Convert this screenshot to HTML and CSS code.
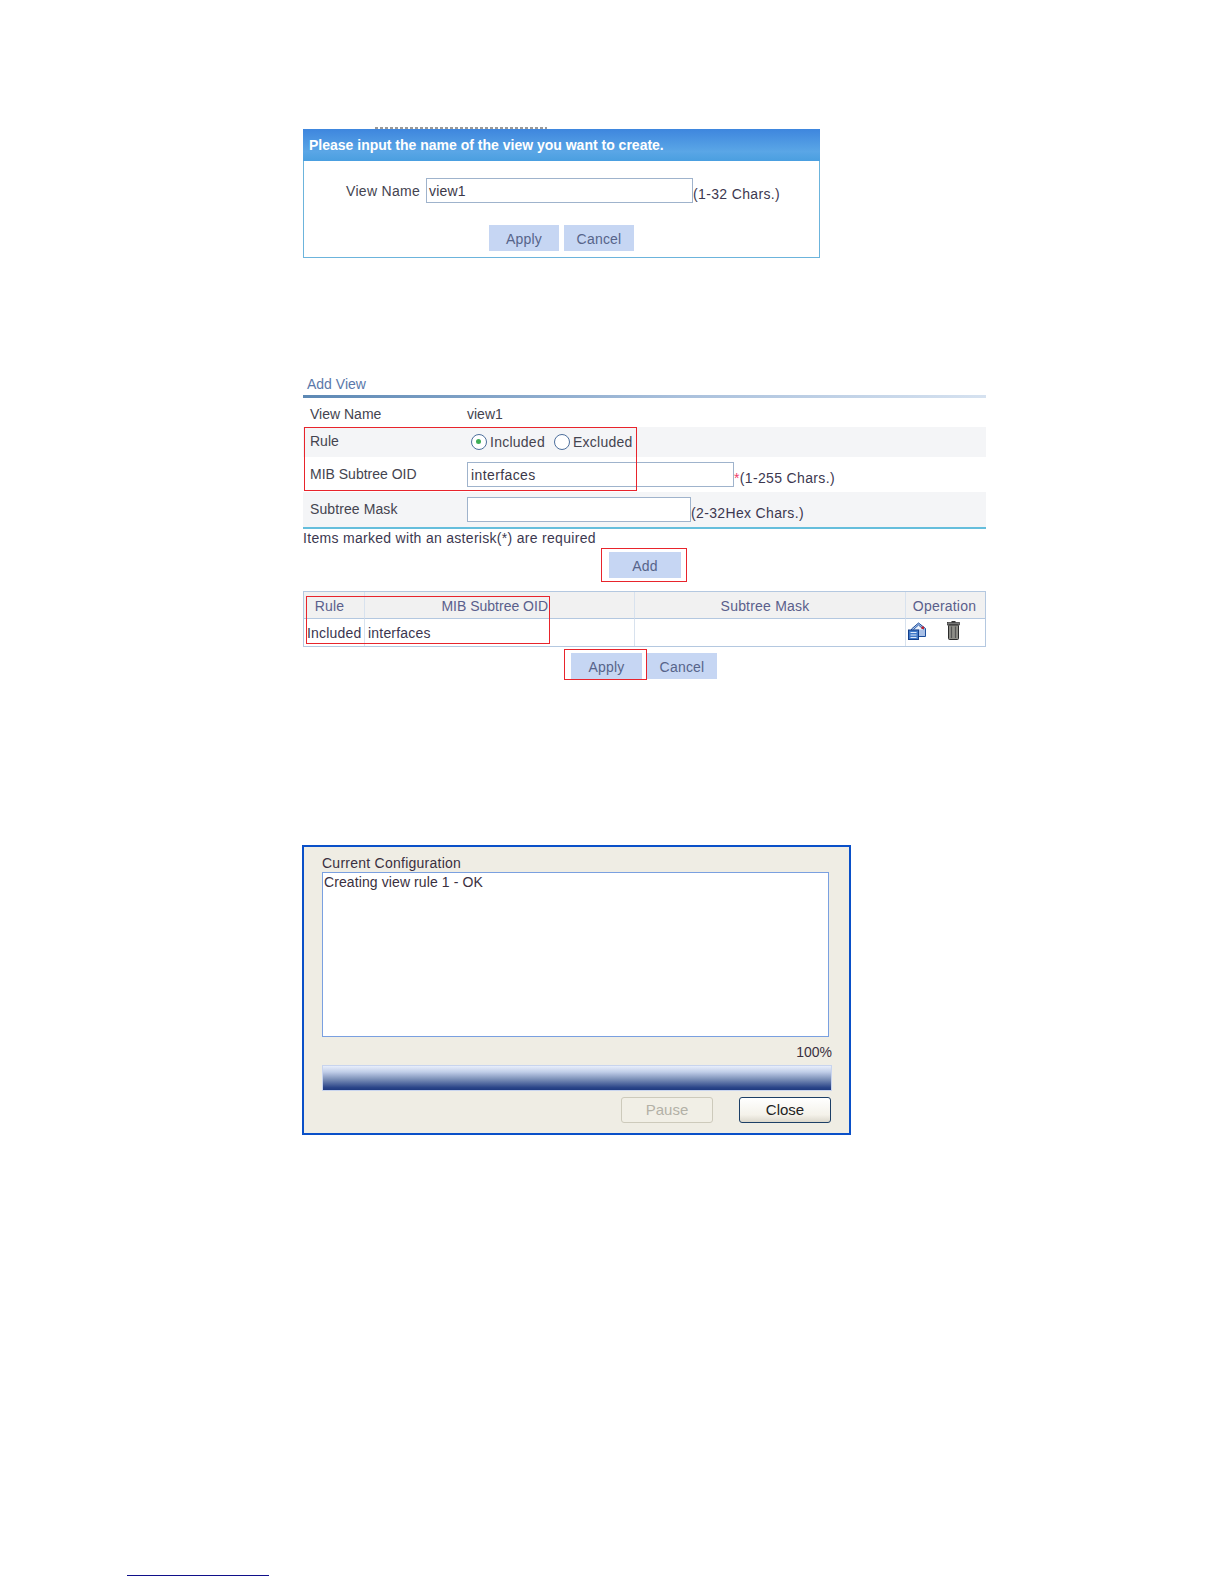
FILE: index.html
```html
<!DOCTYPE html>
<html lang="en">
<head>
<meta charset="utf-8">
<title>View configuration</title>
<link rel="stylesheet" href="styles.css">
</head>
<body>
<main class="page">
  <div class="clip-strip"></div>
  <section class="create">
    <div class="create-head">Please input the name of the view you want to create.</div>
    <div class="create-row">
      <span class="create-label">View Name</span>
      <span class="input create-input">view1</span>
      <span class="hint">(1-32 Chars.)</span>
    </div>
    <div class="create-btns">
      <span class="btn">Apply</span>
      <span class="btn">Cancel</span>
    </div>
  </section>

  <section class="add">
    <div class="add-title">Add View</div>
    <div class="add-rule"></div>
    <div class="row r-name"><span class="lab">View Name</span><span class="val">view1</span></div>
    <div class="row r-rule shade">
      <span class="lab">Rule</span>
      <span class="radios">
        <span class="radio on"></span><span>Included</span>
        <span class="radio"></span><span>Excluded</span>
      </span>
    </div>
    <div class="row r-oid">
      <span class="lab">MIB Subtree OID</span>
      <span class="input oid-input">interfaces</span>
      <span class="hint"><span class="star">*</span>(1-255 Chars.)</span>
    </div>
    <div class="row r-mask shade">
      <span class="lab">Subtree Mask</span>
      <span class="input mask-input"></span>
      <span class="hint">(2-32Hex Chars.)</span>
    </div>
    <div class="note">Items marked with an asterisk(*) are required</div>
    <div class="add-btn-row"><span class="btn">Add</span></div>
    <div class="table">
      <div class="cell head h1">Rule</div>
      <div class="cell head h2">MIB Subtree OID</div>
      <div class="cell head h3">Subtree Mask</div>
      <div class="cell head h4">Operation</div>
      <div class="cell body">Included</div>
      <div class="cell body">interfaces</div>
      <div class="cell body"></div>
      <div class="cell body ops">
        <svg class="ico" viewBox="0 0 18 18" aria-hidden="true">
          <path d="M3.500 7 10.500 1 17.500 6.500V14.500H3.500z" fill="#a9c0e6" stroke="#1d4f9c"/>
          <path d="M5.500 7.500 10.500 3l5 4.500" fill="#eef3fb" stroke="#2c60ad"/>
          <rect x="13.500" y="4.500" width="2.500" height="2.500" fill="#c4202c"/>
          <rect x="0.500" y="8" width="10" height="9.500" fill="#3f78c8" stroke="#143f8a"/>
          <path d="M2.500 10.500h6M2.500 13h6M2.500 15.500h6" stroke="#dbe8fa"/>
        </svg>
        <svg class="ico trash" viewBox="0 0 13 19" aria-hidden="true">
          <rect x="0.500" y="1.500" width="12" height="2.500" fill="#777" stroke="#222" stroke-width="0.600"/>
          <rect x="4.500" y="0" width="4" height="1.500" fill="#333"/>
          <rect x="1.500" y="4" width="10" height="14.500" rx="1" fill="#8e8e88" stroke="#2a2a2a"/>
          <path d="M4.500 5.500v11.500M8.500 5.500v11.500" stroke="#555" stroke-width="1.200"/>
        </svg>
      </div>
    </div>
    <div class="final-btns">
      <span class="btn wide">Apply</span>
      <span class="btn">Cancel</span>
    </div>
    <div class="mark m1"></div>
    <div class="mark m2"></div>
    <div class="mark m3"></div>
    <div class="mark m4"></div>
  </section>

  <section class="dialog">
    <div class="dlg-label">Current Configuration</div>
    <div class="log">Creating view rule 1 - OK</div>
    <div class="pct">100%</div>
    <div class="bar"></div>
    <div class="dlg-btns">
      <span class="xp disabled">Pause</span>
      <span class="xp">Close</span>
    </div>
  </section>

  <div class="footnote-rule"></div>
</main>
</body>
</html>
```
FILE: styles.css
```css
* { box-sizing: border-box; }
html, body { margin: 0; background: #fff; }
body { font-family: "Liberation Sans", Arial, sans-serif; font-size: 14px; line-height: 16px; color: #3a3550; }
.page { position: relative; width: 1224px; height: 1584px; padding: 127px 0 0 303px; overflow: hidden; }

.clip-strip { height: 2px; margin-left: 72px; width: 172px; background: repeating-linear-gradient(90deg, #999 0 3px, #fff 3px 5px); }

.input { display: block; background: #fff; border: 1px solid #9fb3cc; height: 25px; line-height: 24px; padding-left: 3px; flex: none; color: #3c3848; letter-spacing: 0.4px; }
.hint { white-space: nowrap; color: #3c3850; padding-top: 8px; letter-spacing: 0.35px; }
.star { color: #f0406a; }
.btn { display: flex; align-items: center; justify-content: center; width: 70px; height: 26px; background: #c6d6f3; color: #56648a; padding-top: 2px; letter-spacing: 0.2px; }
.btn.wide { width: 71px; }

.create { width: 517px; height: 129px; border: 1px solid #6cb4dc; border-top: 0; }
.create-head { height: 32px; margin: 0 -1px; padding-left: 6px; line-height: 32px; font-weight: bold; color: #fff; background: linear-gradient(#3e86de, #5aa6e6 70%, #4a9fe0); }
.create-row { display: flex; align-items: flex-start; margin-top: 17px; padding-left: 42px; height: 25px; }
.create-label { width: 80px; padding-top: 5px; color: #444450; letter-spacing: 0.3px; }
.create-input { width: 267px; padding-left: 2px; letter-spacing: 0.2px; }
.create-btns { display: flex; gap: 5px; margin-top: 22px; padding-left: 185px; }

.add { position: relative; width: 683px; margin-top: 116px; }
.add-title { height: 21px; padding-left: 4px; line-height: 20px; color: #5a78aa; }
.add-rule { height: 3px; background: linear-gradient(90deg, #5c88b4, #a9c0dc 55%, #d6e2f0); }
.row { display: flex; align-items: flex-start; padding-left: 7px; color: #44444f; }
.shade { background: #f4f5f7; }
.lab { width: 157px; }
.r-name { height: 29px; padding-top: 8px; }
.r-rule { height: 30px; padding-top: 6px; }
.radios { display: flex; align-items: center; padding: 1px 0 0 4px; letter-spacing: 0.25px; }
.radio { width: 16px; height: 16px; margin-right: 3px; border: 1.500px solid #4d6f9c; border-radius: 50%; background: #fff; position: relative; }
.radio:not(:first-child) { margin-left: 9px; }
.radio.on::after { content: ""; position: absolute; left: 4px; top: 4px; width: 5px; height: 5px; border-radius: 50%; background: #3fae57; }
.r-oid { height: 35px; padding-top: 5px; }
.r-oid .lab { padding-top: 4px; }
.oid-input { width: 267px; }
.r-mask { height: 37px; padding-top: 5px; border-bottom: 2px solid #65bedc; }
.r-mask .lab { padding-top: 4px; letter-spacing: 0.1px; }
.mask-input { width: 224px; }
.note { height: 18px; line-height: 18px; letter-spacing: 0.3px; color: #3c3850; }
.add-btn-row { display: flex; padding: 5px 0 0 306px; }
.add-btn-row .btn { width: 72px; }
.table { display: grid; grid-template-columns: 61px 270px 271px 79px; grid-template-rows: 27px 27px; border: 1px solid #b4c8e0; margin-top: 13px; width: 683px; }
.cell { line-height: 27px; border-right: 1px solid #d8e2ee; white-space: nowrap; padding: 1px 0 0 3px; letter-spacing: 0.2px; }
.cell:nth-child(4n) { border-right: 0; }
.head { background: #f1f1f1; color: #5a5f8c; border-bottom: 1px solid #b4c8e0; padding: 2px 0 0; text-align: center; line-height: 24px; }
.h1 { padding-right: 9px; }
.h2 { text-align: right; padding-right: 86px; letter-spacing: 0; }
.h3 { padding-right: 10px; }
.h4 { padding-right: 2px; }
.body { color: #3a3550; }
.ops { display: flex; align-items: flex-start; padding: 3px 0 0 2px; }
.ico { display: block; width: 18px; height: 18px; flex: none; }
.trash { width: 13px; height: 19px; margin: -1px 0 0 21px; }
.final-btns { display: flex; gap: 5px; padding-left: 268px; margin-top: 6px; }

.mark { position: absolute; border: 1px solid #e8242c; pointer-events: none; }
.m1 { left: 1px; top: 53px; width: 333px; height: 64px; }
.m2 { left: 298px; top: 174px; width: 86px; height: 34px; }
.m3 { left: 3px; top: 222px; width: 244px; height: 48px; }
.m4 { left: 261px; top: 275px; width: 83px; height: 31px; }

.dialog { width: 549px; height: 290px; margin: 166px 0 0 -1px; border: 2px solid #0a50c8; background: #efede4; padding: 7px 17px 0 18px; color: #3a3040; }
.dlg-label { height: 18px; line-height: 18px; letter-spacing: 0.25px; }
.log { height: 165px; background: #fff; border: 1px solid #7aa0e0; padding: 1px 0 0 1px; margin-right: 3px; letter-spacing: 0.1px; }
.pct { height: 28px; line-height: 30px; text-align: right; }
.bar { height: 26px; border: 1px solid #c8d4ee; background: linear-gradient(#e8eefb, #c0cde8 25%, #7c90b8 55%, #2a4488 90%, #1f3a80); }
.dlg-btns { display: flex; justify-content: flex-end; gap: 26px; margin-top: 6px; padding-right: 1px; }
.xp { display: flex; align-items: center; justify-content: center; width: 92px; height: 26px; border: 1px solid #1c3f66; border-radius: 3px; padding-bottom: 1px; background: linear-gradient(#fff, #f4f2ea 70%, #dcd8cc); font-size: 15px; color: #222; }
.xp.disabled { border-color: #cdcabb; background: #f1efe6; color: #b3b1a6; }

.footnote-rule { position: absolute; left: 127px; top: 1575px; width: 142px; height: 1px; background: #10108a; }
```
